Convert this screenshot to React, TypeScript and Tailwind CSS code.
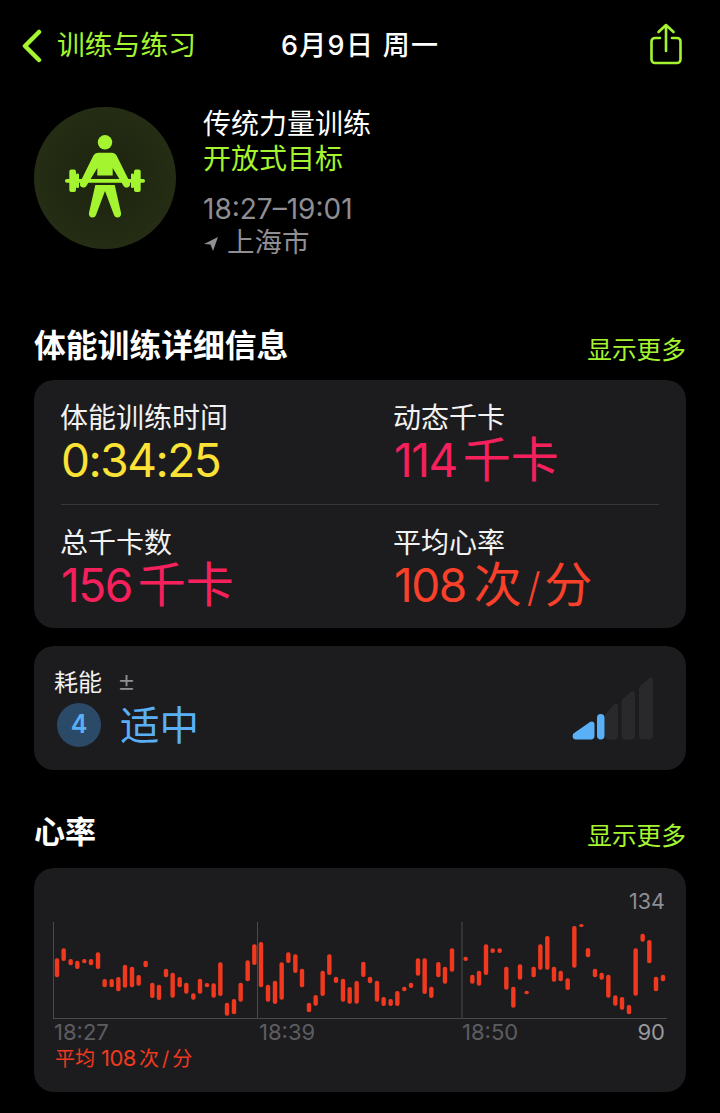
import React from "react";

const green = "text-[#a4f52f]";

// heart rate bars as [x, top, bottom] in page pixels
const bars: [number, number, number][] = [
  ...[
    [81, 175, 232], [101, 145, 183], [122, 177, 196], [142, 182, 207], [163, 177, 190],
    [183, 177, 196], [204, 157, 207], [224, 237, 262], [245, 237, 262], [265, 231, 274],
    [285, 194, 263], [306, 200, 262], [326, 225, 257], [347, 182, 202], [367, 248, 294],
    [387, 254, 300], [408, 206, 232], [428, 218, 293], [449, 231, 262], [469, 248, 281],
    [490, 280, 299], [510, 236, 281], [531, 249, 262], [551, 250, 293], [571, 187, 288],
    [591, 308, 347], [612, 297, 343], [632, 248, 305], [653, 181, 244], [673, 133, 195],
    [693, 126, 262], [714, 254, 305], [735, 242, 312], [755, 187, 299], [775, 157, 189],
    [796, 163, 219], [816, 206, 262], [837, 308, 337], [857, 285, 317], [878, 212, 288],
    [898, 163, 225], [918, 230, 249], [939, 236, 305], [959, 261, 311], [980, 243, 311],
  ].map(([x, a, b]) => [30 + x / 3, 900 + a / 3, 900 + b / 3] as [number, number, number]),
  ...[
    [40, 245, 291], [60, 290, 310], [81, 302, 365], [101, 351, 378], [122, 357, 378],
    [142, 333, 378], [163, 320, 334], [183, 308, 324], [204, 235, 287], [224, 235, 342],
    [244, 320, 354], [265, 246, 292], [285, 260, 311], [306, 205, 275], [347, 230, 243],
    [367, 284, 311], [387, 272, 317], [408, 193, 285], [428, 205, 219], [449, 205, 219],
    [469, 260, 329], [490, 320, 383], [510, 253, 299], [530, 332, 343], [551, 260, 292],
    [571, 193, 269], [592, 168, 269], [612, 260, 305], [632, 272, 304], [653, 295, 330],
    [673, 138, 263], [694, 132, 141], [714, 204, 232], [735, 266, 292], [755, 278, 299],
    [775, 284, 353], [796, 346, 377], [816, 351, 389], [837, 375, 403], [857, 205, 347],
    [878, 161, 185], [898, 180, 250], [918, 290, 334], [939, 284, 304],
  ].map(([x, a, b]) => [350 + x / 3, 880 + a / 3, 880 + b / 3] as [number, number, number]),
];

function Lifter() {
  return (
    <svg viewBox="60 132.500 90 90" className="w-[90px] h-[90px]" fill="#a4f52f">
      <circle cx="105" cy="141.800" r="7.200" />
      {/* torso + arms */}
      <path d="M98.500 152.300h13c2.500 0 4 1 5.200 3L129.500 181c1.300 2.800.5 5-1.500 5.800-2 .8-3.700 0-5-2.300l-10.300-17V175H97.300v-7.500L87 184.500c-1.300 2.300-3 3.100-5 2.300-2-.8-2.800-3-1.500-5.800l12.800-25.700c1.200-2 2.700-3 5.200-3z" />
      {/* bar and plates */}
      <rect x="65" y="178.600" width="80" height="3.600" rx="1.800" />
      <rect x="69.300" y="169" width="6.700" height="22.500" rx="2" />
      <rect x="76" y="173" width="3" height="14.500" rx="1.200" />
      <rect x="134" y="169" width="6.700" height="22.500" rx="2" />
      <rect x="131" y="173" width="3" height="14.500" rx="1.200" />
      {/* legs */}
      <path d="M95.300 184.500h19.400l6.300 27.700c.5 2.500-.8 4.500-3 4.800-2 .3-3.500-.8-4.200-3L105 190.500 96.200 214c-.7 2.200-2.200 3.300-4.200 3-2.200-.3-3.500-2.300-3-4.800z" />
    </svg>
  );
}

function Effort() {
  return (
    <svg viewBox="572 676 84 66" className="w-[84px] h-[66px]">
      <path d="M639 689c0-1.500.7-2.800 2-3.800l8-7c1.800-1.500 4-.6 4 2V736c0 2-1.500 3.500-3.500 3.500h-7c-2 0-3.500-1.500-3.500-3.500z" fill="#29292b" />
      <path d="M621.500 702c0-1.500.7-2.500 2-3.500l8-7c1.800-1.300 3.500-.4 3.500 1.800V736c0 2-1.500 3.500-3.500 3.500h-6.500c-2 0-3.500-1.500-3.500-3.500z" fill="#29292b" />
      <path d="M605 715l9-10.500c1.500-1.500 4-.8 4 1.500V736c0 2-1.500 3.500-3.500 3.500h-6c-2 0-3.500-1.500-3.500-3.500z" fill="#29292b" />
      <rect x="597" y="714" width="7.500" height="25.500" rx="3.700" fill="#5ab0f7" />
      <path d="M573.500 733.500l16.500-11.500c1.800-1.200 4.500-.3 4.500 2V736c0 2-1.500 3.500-3.500 3.500h-15.500c-3 0-3.500-4-2-6z" fill="#5ab0f7" />
    </svg>
  );
}

function Stat({ label, color, children }: { label: string; color: string; children: React.ReactNode }) {
  return (
    <div>
      <div className="text-[28px] leading-[34px] text-[#f2f2f2] -ml-[1px]">{label}</div>
      <div className={`text-[46px] leading-[50px] tracking-[-1.500px] whitespace-nowrap ${color}`}>{children}</div>
    </div>
  );
}

export default function App() {
  return (
    <div
      className="w-[720px] h-[1113px] overflow-hidden bg-black text-white"
      style={{ fontFamily: 'Inter, "Noto Sans CJK SC", sans-serif' }}
    >
      {/* nav bar */}
      <div className="h-[92px] pl-[22px] pr-[38px] flex items-center">
        <svg viewBox="0 0 20 34" className="w-[20px] h-[34px]" fill="none" stroke="#a4f52f" strokeWidth="4.500" strokeLinecap="round" strokeLinejoin="round">
          <path d="M17 3L3 17l14 14" />
        </svg>
        <span className={`ml-[15px] w-[224px] text-[27.800px] ${green}`}>训练与练习</span>
        <span className="text-[27px] tracking-[1.300px] font-medium whitespace-nowrap">6月9日 周一</span>
        <svg viewBox="0 0 32 42" className="ml-auto w-[32px] h-[42px] -mt-[4px]" fill="none" stroke="#a4f52f" strokeWidth="2.600" strokeLinecap="round" strokeLinejoin="round">
          <path d="M10 15H5a3.500 3.500 0 0 0-3.500 3.500v18A3.500 3.500 0 0 0 5 40h22a3.500 3.500 0 0 0 3.500-3.500v-18A3.500 3.500 0 0 0 27 15h-5" />
          <path d="M16 28V2M8.500 9L16 2l7.500 7" />
        </svg>
      </div>

      {/* workout summary */}
      <div className="pl-[34px] flex items-start gap-[28px] mt-[15px]">
        <div className="w-[142px] h-[142px] rounded-full bg-radial from-[#1c2410] to-[#283015] flex items-center justify-center">
          <Lifter />
        </div>
        <div className="-ml-[1px]">
          <div className="text-[28px] leading-[35px]">传统力量训练</div>
          <div className={`text-[28px] leading-[35px] ${green}`}>开放式目标</div>
          <div className="mt-[15px] text-[#8e8e93] text-[28px] leading-[35px]">18:27–19:01</div>
          <div className="flex items-center -mt-[1px] text-[#8e8e93] text-[27.500px] leading-[32px]">
            <svg viewBox="0 0 14 14" className="w-[14px] h-[14px] ml-[1px] mr-[9px] mt-[3px]" fill="#8e8e93">
              <path d="M14 0L9 14 6.500 7.500 0 7z" />
            </svg>
            上海市
          </div>
        </div>
      </div>

      {/* details */}
      <div className="mt-[66px] px-[34px] flex items-center justify-between h-[44px]">
        <h2 className="text-[31.800px] font-bold">体能训练详细信息</h2>
        <span className={`text-[24.700px] mt-[10px] ${green}`}>显示更多</span>
      </div>
      <div className="mx-[34px] mt-[12px] h-[248px] rounded-[20px] bg-[#1c1c1e] px-[27px] pt-[21px]">
        <div className="grid grid-cols-[333px_1fr] h-[103px]">
          <Stat label="体能训练时间" color="text-[#fbe236]">0:34:25</Stat>
          <Stat label="动态千卡" color="text-[#f5205c]">
            114<span className="ml-[6px] text-[48px] tracking-normal">千卡</span>
          </Stat>
        </div>
        <div className="h-px bg-[#38383a]" />
        <div className="grid grid-cols-[333px_1fr] pt-[21px]">
          <Stat label="总千卡数" color="text-[#f5205c]">
            156<span className="ml-[6px] text-[48px] tracking-normal">千卡</span>
          </Stat>
          <Stat label="平均心率" color="text-[#f8402a]">
            108<span className="ml-[8px] text-[48px] tracking-normal">次</span>
            <span className="ml-[5px] text-[40px] font-light">/</span>
            <span className="ml-[5px] text-[48px] tracking-normal">分</span>
          </Stat>
        </div>
      </div>

      {/* effort */}
      <div className="mx-[34px] mt-[18px] h-[124px] rounded-[20px] bg-[#1c1c1e] pl-[20px] pr-[30px] relative">
        <div className="pt-[19px] flex items-center h-[54px]">
          <span className="text-[24px] text-[#f2f2f2]">耗能</span>
          <span className="ml-[15px] text-[29px] font-light text-[#8e8e93] -mt-[4px]">±</span>
        </div>
        <div className="flex items-center pl-[3px] h-[50px]">
          <div className="w-[44px] h-[44px] rounded-full bg-[#2b4a68] flex items-center justify-center text-[#5ab0f7] text-[25px] font-semibold">4</div>
          <span className="ml-[19px] mt-[3px] text-[39.500px] text-[#5ab0f7]">适中</span>
        </div>
        <div className="absolute right-[30px] top-[30px]">
          <Effort />
        </div>
      </div>

      {/* heart rate */}
      <div className="mt-[39px] px-[34px] flex items-center justify-between h-[46px]">
        <h2 className="text-[31px] font-bold">心率</h2>
        <span className={`text-[24.700px] mt-[10px] ${green}`}>显示更多</span>
      </div>
      <div className="mx-[34px] mt-[13px] h-[224px] rounded-[20px] bg-[#1c1c1e] pl-[19px] pt-[21px]">
        <div className="h-[24px] pr-[21px] text-right text-[21.500px] leading-[24px] text-[#8e8e93]">134</div>
        <svg viewBox="53 922 614 98" className="w-[614px] h-[98px] mt-[9px]">
          {[53.500, 257.500, 462].map((x) => (
            <line key={x} x1={x} x2={x} y1="922" y2="1018" stroke="#4a4a4d" strokeWidth="1" />
          ))}
          <line x1="53" x2="667" y1="1018.500" y2="1018.500" stroke="#4a4a4d" strokeWidth="1" />
          {bars.map(([x, top, bottom], i) => (
            <rect key={i} x={x - 2.200} y={top} width="4.400" height={bottom - top} rx="2" fill="#f0391f" />
          ))}
        </svg>
        <div className="flex pl-[1px] pr-[21px] -mt-[1px] text-[22px] leading-[26px] text-[#5c5c60]">
          <span className="w-[205px]">18:27</span>
          <span className="w-[203px]">18:39</span>
          <span>18:50</span>
          <span className="ml-auto text-[#98989d]">90</span>
        </div>
        <div className="pl-[2px] text-[20px] leading-[26px] text-[#f0391f] whitespace-nowrap">
          平均<span className="ml-[6px] text-[22px] tracking-[-0.500px]">108</span>
          <span className="ml-[3px]">次</span>
          <span className="ml-[3px]">/</span>
          <span className="ml-[3px]">分</span>
        </div>
      </div>
    </div>
  );
}
